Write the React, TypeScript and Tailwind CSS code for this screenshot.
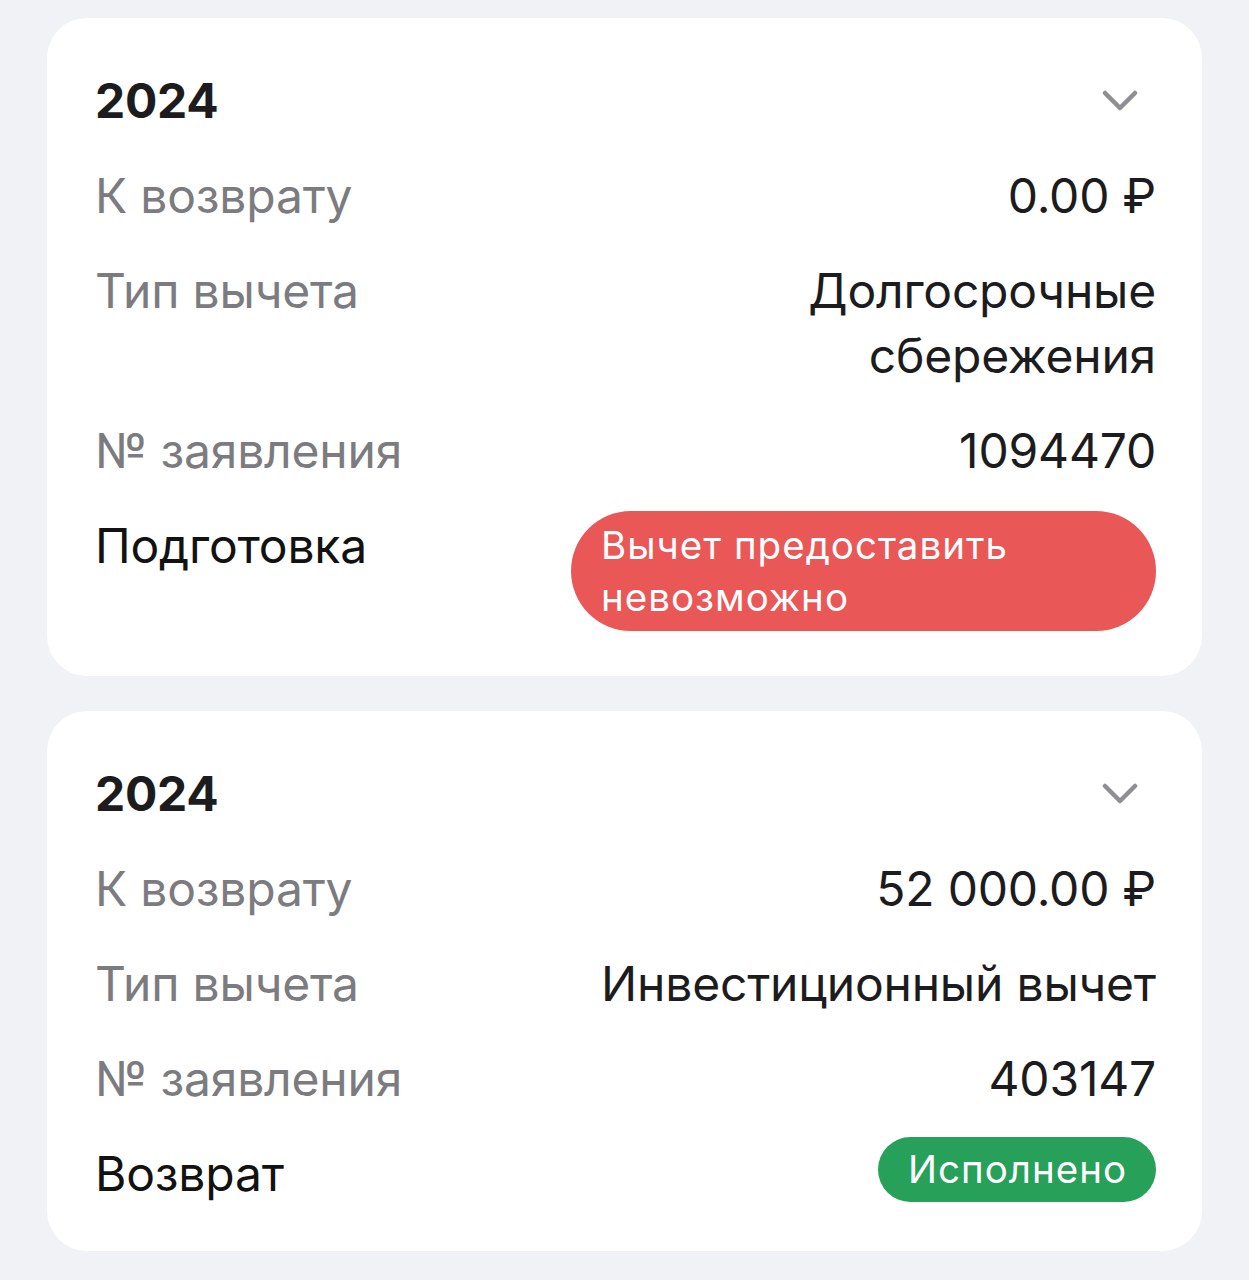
import React from "react";

type Row = { label: string; value: React.ReactNode };

const Chevron = () => (
  <svg width="36" height="22" viewBox="0 0 36 22" fill="none" className="mr-[18px]">
    <path d="M3 3 L18 18 L33 3" stroke="#8e8e93" strokeWidth="4.5" strokeLinecap="round" strokeLinejoin="round" />
  </svg>
);

const Card = ({ rows, status, badge, badgeRowAlign }: { rows: Row[]; status: string; badge: React.ReactNode; badgeRowAlign: string }) => (
  <div className="bg-white rounded-[40px] pt-[50px] pb-[45px] pl-12 pr-[46px]">
    <div className="flex items-center justify-between h-[65px]">
      <span className="text-[48px] font-bold text-[#1c1c1e] tracking-[-0.3px]">2024</span>
      <Chevron />
    </div>
    <div className="mt-[30px] flex flex-col gap-[30px]">
      {rows.map((r) => (
        <div key={r.label} className="flex justify-between items-start gap-6">
          <span className="shrink-0 text-[#7b7b80] text-[48px] leading-[65px] tracking-[-0.2px]">{r.label}</span>
          <span className="text-right text-[#1c1c1e] text-[48px] leading-[65px] tracking-[-0.2px] max-w-[600px]">{r.value}</span>
        </div>
      ))}
      <div className={`flex justify-between gap-6 ${badgeRowAlign}`}>
        <span className="shrink-0 text-[#121212] text-[48px] leading-[65px] tracking-[-0.2px]">{status}</span>
        {badge}
      </div>
    </div>
  </div>
);

export default function App() {
  return (
    <div
      className="min-h-[1280px] bg-[#f0f2f5] px-[47px] pt-[18px] flex flex-col gap-[35px]"
      style={{ fontFamily: "Inter, 'Noto Sans', sans-serif" }}
    >
      <Card
        rows={[
          { label: "К возврату", value: "0.00 ₽" },
          { label: "Тип вычета", value: "Долгосрочные сбережения" },
          { label: "№ заявления", value: "1094470" },
        ]}
        status="Подготовка"
        badgeRowAlign="items-start"
        badge={
          <div className="-mt-[2px] w-[585px] rounded-[60px] bg-[#ea5757] text-white text-[38.5px] leading-[52px] tracking-[1px] px-[30px] py-2">
            Вычет предоставить невозможно
          </div>
        }
      />
      <Card
        rows={[
          { label: "К возврату", value: "52 000.00 ₽" },
          { label: "Тип вычета", value: "Инвестиционный вычет" },
          { label: "№ заявления", value: "403147" },
        ]}
        status="Возврат"
        badgeRowAlign="items-center"
        badge={
          <div className="rounded-full bg-[#27a05a] text-white text-[38.5px] leading-[53px] tracking-[1px] pl-[30px] pr-[29px] py-[6px] -mt-[8px]">
            Исполнено
          </div>
        }
      />
    </div>
  );
}
